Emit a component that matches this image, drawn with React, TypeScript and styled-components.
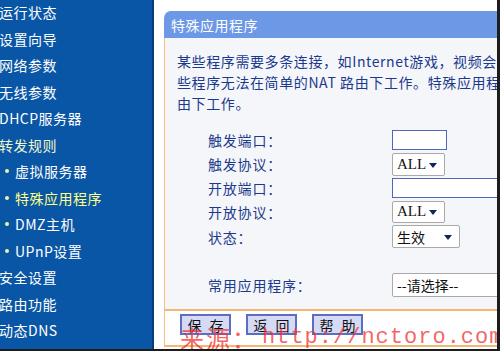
import React from "react";
import styled, { createGlobalStyle } from "styled-components";

const GlobalStyle = createGlobalStyle`
  html, body {
    margin: 0;
    padding: 0;
    background: #ffffff;
  }
  body {
    font-family: "Noto Sans CJK SC", "Liberation Sans", sans-serif;
  }
`;

const Frame = styled.div`
  position: relative;
  width: 500px;
  height: 351px;
  box-sizing: border-box;
  border-right: 3px solid #1c1c1c;
  border-bottom: 2px solid #1c1c1c;
  display: flex;
  overflow: hidden;
  background: #ffffff;
`;

const Sidebar = styled.nav`
  width: 152px;
  flex-shrink: 0;
  background: #0a56a6;
  border-right: 2px solid #0a3a78;
  display: flex;
  flex-direction: column;
  margin-top: -1px;
`;

const NavItem = styled.div<{ $sub?: boolean; $active?: boolean; $open?: boolean }>`
  height: 26.5px;
  display: flex;
  align-items: center;
  gap: 6px;
  padding-left: ${(p) => (p.$sub ? "5px" : "0")};
  margin-left: ${(p) => (p.$sub ? "0" : "-1px")};
  font-size: 14px;
  letter-spacing: 0.5px;
  white-space: nowrap;
  color: ${(p) => (p.$active ? "#ffff8a" : p.$open ? "#f4f6c8" : "#ffffff")};
`;

const Bullet = styled.span`
  width: 4px;
  height: 4px;
  border-radius: 50%;
  background: #f2f0a6;
  flex-shrink: 0;
`;

const Main = styled.main`
  flex: 1;
  padding: 11px 0 0 10px;
  overflow: hidden;
`;

const Panel = styled.section`
  width: 420px;
  display: flex;
  flex-direction: column;
`;

const PanelHead = styled.header`
  height: 27px;
  background: #6c98e6;
  border-top-left-radius: 7px;
  color: #ffffff;
  font-size: 14px;
  display: flex;
  align-items: center;
  padding-left: 7px;
  letter-spacing: 0.5px;
`;

const PanelBody = styled.div`
  background: #f5f6f9;
  border-left: 1px solid #f3c27c;
  padding: 13px 0 0 12px;
  height: 273px;
  box-sizing: border-box;
  border-bottom: 2px solid #f3b877;
`;

const Intro = styled.div`
  font-size: 14px;
  line-height: 21px;
  color: #1b3a8e;
  letter-spacing: 0.6px;
`;

const IntroLine = styled.div`
  white-space: nowrap;
`;

const Form = styled.div`
  display: grid;
  grid-template-columns: 184px auto;
  align-items: center;
  row-gap: 2.5px;
  margin: 16px 0 0 31px;
`;

const Label = styled.div`
  font-size: 14px;
  color: #1b3a8e;
  letter-spacing: 0.8px;
`;

const TextInput = styled.div<{ $w: number }>`
  width: ${(p) => p.$w}px;
  height: 20px;
  box-sizing: border-box;
  background: #ffffff;
  border: 1px solid #4f69b8;
`;

const Select = styled.div<{ $w: number; $h?: number }>`
  width: ${(p) => p.$w}px;
  height: ${(p) => p.$h ?? 23}px;
  box-sizing: border-box;
  background: #ffffff;
  border: 1px solid #a9a9a9;
  border-radius: 2px;
  display: flex;
  align-items: center;
  justify-content: space-between;
  padding: 0 7px 0 4px;
  font-size: 14px;
  color: #111111;
`;

const SerifText = styled.span`
  font-family: "Liberation Serif", "Noto Sans CJK SC", serif;
  font-size: 15px;
`;

const Arrow = styled.span`
  width: 0;
  height: 0;
  border-left: 4.5px solid transparent;
  border-right: 4.5px solid transparent;
  border-top: 5px solid #14255e;
  margin-top: 2px;
`;

const Spacer = styled.div`
  grid-column: 1 / span 2;
  height: 20px;
`;

const ButtonBar = styled.div`
  border-left: 1px solid #f3c27c;
  border-bottom: 2px solid #f3b877;
  height: 36px;
  box-sizing: border-box;
  display: flex;
  gap: 15px;
  padding: 3px 0 0 15px;
  background: #ffffff;
`;

const Button = styled.button`
  width: 51px;
  height: 21px;
  box-sizing: border-box;
  background: #d6daf4;
  border: 2px solid #5a6ec4;
  display: flex;
  align-items: center;
  justify-content: center;
  gap: 8px;
  padding: 0;
  font-family: "Noto Sans CJK SC", sans-serif;
  font-size: 14px;
  color: #111111;
  line-height: 1;
`;

const Watermark = styled.div`
  position: absolute;
  left: 180px;
  top: 320px;
  display: flex;
  align-items: center;
  color: rgba(240, 50, 50, 0.75);
  white-space: nowrap;
  pointer-events: none;
`;

const WaterCjk = styled.span`
  font-family: "Noto Sans CJK SC", sans-serif;
  font-size: 24px;
  letter-spacing: 2px;
`;

const WaterLatin = styled.span`
  font-family: "Liberation Mono", monospace;
  font-size: 22px;
  letter-spacing: 1px;
  margin-left: 4px;
`;

const navItems: { text: string; sub?: boolean; active?: boolean; open?: boolean }[] = [
  { text: "运行状态" },
  { text: "设置向导" },
  { text: "网络参数" },
  { text: "无线参数" },
  { text: "DHCP服务器" },
  { text: "转发规则", open: true },
  { text: "虚拟服务器", sub: true },
  { text: "特殊应用程序", sub: true, active: true },
  { text: "DMZ主机", sub: true },
  { text: "UPnP设置", sub: true },
  { text: "安全设置" },
  { text: "路由功能" },
  { text: "动态DNS" },
];

const introLines = [
  "某些程序需要多条连接，如Internet游戏，视频会议，网络电话等。由于防火墙的存在，这",
  "些程序无法在简单的NAT 路由下工作。特殊应用程序使得某些这样的应用程序能够在NAT路",
  "由下工作。",
];

export default function App() {
  return (
    <>
      <GlobalStyle />
      <Frame>
        <Sidebar>
          {navItems.map((item) => (
            <NavItem key={item.text} $sub={item.sub} $active={item.active} $open={item.open}>
              {item.sub && <Bullet />}
              {item.text}
            </NavItem>
          ))}
        </Sidebar>
        <Main>
          <Panel>
            <PanelHead>特殊应用程序</PanelHead>
            <PanelBody>
              <Intro>
                {introLines.map((line) => (
                  <IntroLine key={line}>{line}</IntroLine>
                ))}
              </Intro>
              <Form>
                <Label>触发端口：</Label>
                <TextInput $w={55} />
                <Label>触发协议：</Label>
                <Select $w={53}>
                  <SerifText>ALL</SerifText>
                  <Arrow />
                </Select>
                <Label>开放端口：</Label>
                <TextInput $w={160} />
                <Label>开放协议：</Label>
                <Select $w={53} $h={22}>
                  <SerifText>ALL</SerifText>
                  <Arrow />
                </Select>
                <Label>状态：</Label>
                <Select $w={68}>
                  <span>生效</span>
                  <Arrow />
                </Select>
                <Spacer />
                <Label>常用应用程序：</Label>
                <Select $w={160} $h={24}>
                  <span>--请选择--</span>
                </Select>
              </Form>
            </PanelBody>
            <ButtonBar>
              <Button><span>保</span><span>存</span></Button>
              <Button><span>返</span><span>回</span></Button>
              <Button><span>帮</span><span>助</span></Button>
            </ButtonBar>
          </Panel>
        </Main>
        <Watermark>
          <WaterCjk>来源：</WaterCjk>
          <WaterLatin>http://nctoro.com</WaterLatin>
        </Watermark>
      </Frame>
    </>
  );
}
